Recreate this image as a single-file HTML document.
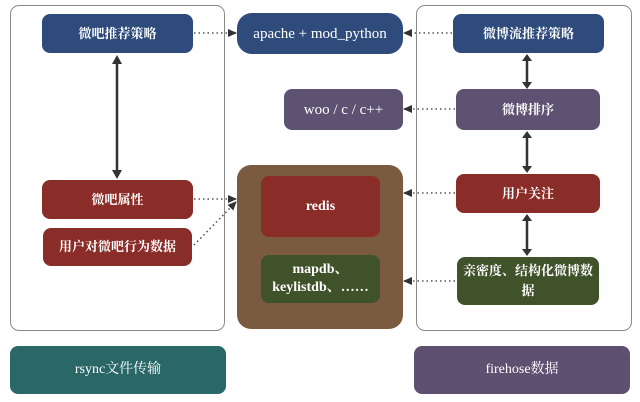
<!DOCTYPE html>
<html><head><meta charset="utf-8"><style>
body{margin:0;width:640px;height:402px;background:#fefefe;position:relative;overflow:hidden;font-family:"Liberation Serif","Noto Serif CJK SC",serif;}
.p{position:absolute;border:1.5px solid #8a8a8a;border-radius:9px;box-sizing:border-box;}
.b{position:absolute;border-radius:8px;color:#fff;display:flex;align-items:center;justify-content:center;text-align:center;font-size:13px;font-weight:bold;box-sizing:border-box;line-height:18px;}
.bl{background:#2e4b7b}.pu{background:#5e5273}.rd{background:#8a2c27}.gr{background:#3f5229}
svg{position:absolute;left:0;top:0}
</style></head><body>
<div class="p" style="left:10px;top:5px;width:215px;height:326px"></div>
<div class="p" style="left:416px;top:5px;width:216px;height:326px"></div>
<div class="b bl" style="left:42px;top:14px;width:151px;height:39px">微吧推荐策略</div>
<div class="b bl" style="left:237px;top:13px;width:166px;height:41px;border-radius:15px;font-weight:normal;font-size:15px">apache + mod_python</div>
<div class="b bl" style="left:453px;top:14px;width:151px;height:39px">微博流推荐策略</div>
<div class="b pu" style="left:284px;top:89px;width:119px;height:41px;font-weight:normal;font-size:15px">woo / c / c++</div>
<div class="b pu" style="left:456px;top:89px;width:144px;height:41px">微博排序</div>
<div class="b" style="left:237px;top:165px;width:166px;height:164px;background:#7a5b3f;border-radius:14px"></div>
<div class="b rd" style="left:261px;top:176px;width:119px;height:61px;font-size:14px">redis</div>
<div class="b gr" style="left:261px;top:255px;width:119px;height:48px;font-size:14px">mapdb、<br>keylistdb、……</div>
<div class="b rd" style="left:456px;top:174px;width:144px;height:39px">用户关注</div>
<div class="b gr" style="left:457px;top:257px;width:142px;height:48px;font-size:13px;line-height:20px">亲密度、结构化微博数<br>据</div>
<div class="b rd" style="left:42px;top:180px;width:151px;height:39px">微吧属性</div>
<div class="b rd" style="left:43px;top:228px;width:149px;height:38px">用户对微吧行为数据</div>
<div class="b" style="left:10px;top:346px;width:216px;height:48px;background:#2a6867;font-weight:normal;font-size:14px">rsync文件传输</div>
<div class="b" style="left:414px;top:346px;width:216px;height:48px;background:#5e5070;font-weight:normal;font-size:14px">firehose数据</div>
<svg width="640" height="402">
<defs><marker id="a" markerUnits="userSpaceOnUse" markerWidth="9" markerHeight="8" refX="8" refY="4" orient="auto"><path d="M0,0 L9,4 L0,8 Z" fill="#333"/></marker></defs>
<g stroke="#555" stroke-width="1.6" stroke-dasharray="1.5,3" fill="none" marker-end="url(#a)">
<line x1="194" y1="33" x2="236" y2="33"/>
<line x1="452" y1="33" x2="404" y2="33"/>
<line x1="455" y1="109" x2="404" y2="109"/>
<line x1="455" y1="193" x2="404" y2="193"/>
<line x1="455" y1="281" x2="404" y2="281"/>
<line x1="194" y1="199" x2="236" y2="199"/>
<line x1="194" y1="245" x2="236" y2="202"/>
</g>
<g stroke="#333" stroke-width="2.5">
<line x1="117" y1="62" x2="117" y2="172"/>
<line x1="527" y1="60" x2="527" y2="83"/>
<line x1="527" y1="137" x2="527" y2="167"/>
<line x1="527" y1="220" x2="527" y2="251"/>
</g>
<g fill="#333">
<path d="M112,64 L117,55 L122,64Z"/><path d="M112,170 L117,179 L122,170Z"/>
<path d="M522,61 L527,54 L532,61Z"/><path d="M522,82 L527,89 L532,82Z"/>
<path d="M522,138 L527,131 L532,138Z"/><path d="M522,166 L527,173 L532,166Z"/>
<path d="M522,221 L527,214 L532,221Z"/><path d="M522,249 L527,256 L532,249Z"/>
</g>
</svg>
</body></html>
